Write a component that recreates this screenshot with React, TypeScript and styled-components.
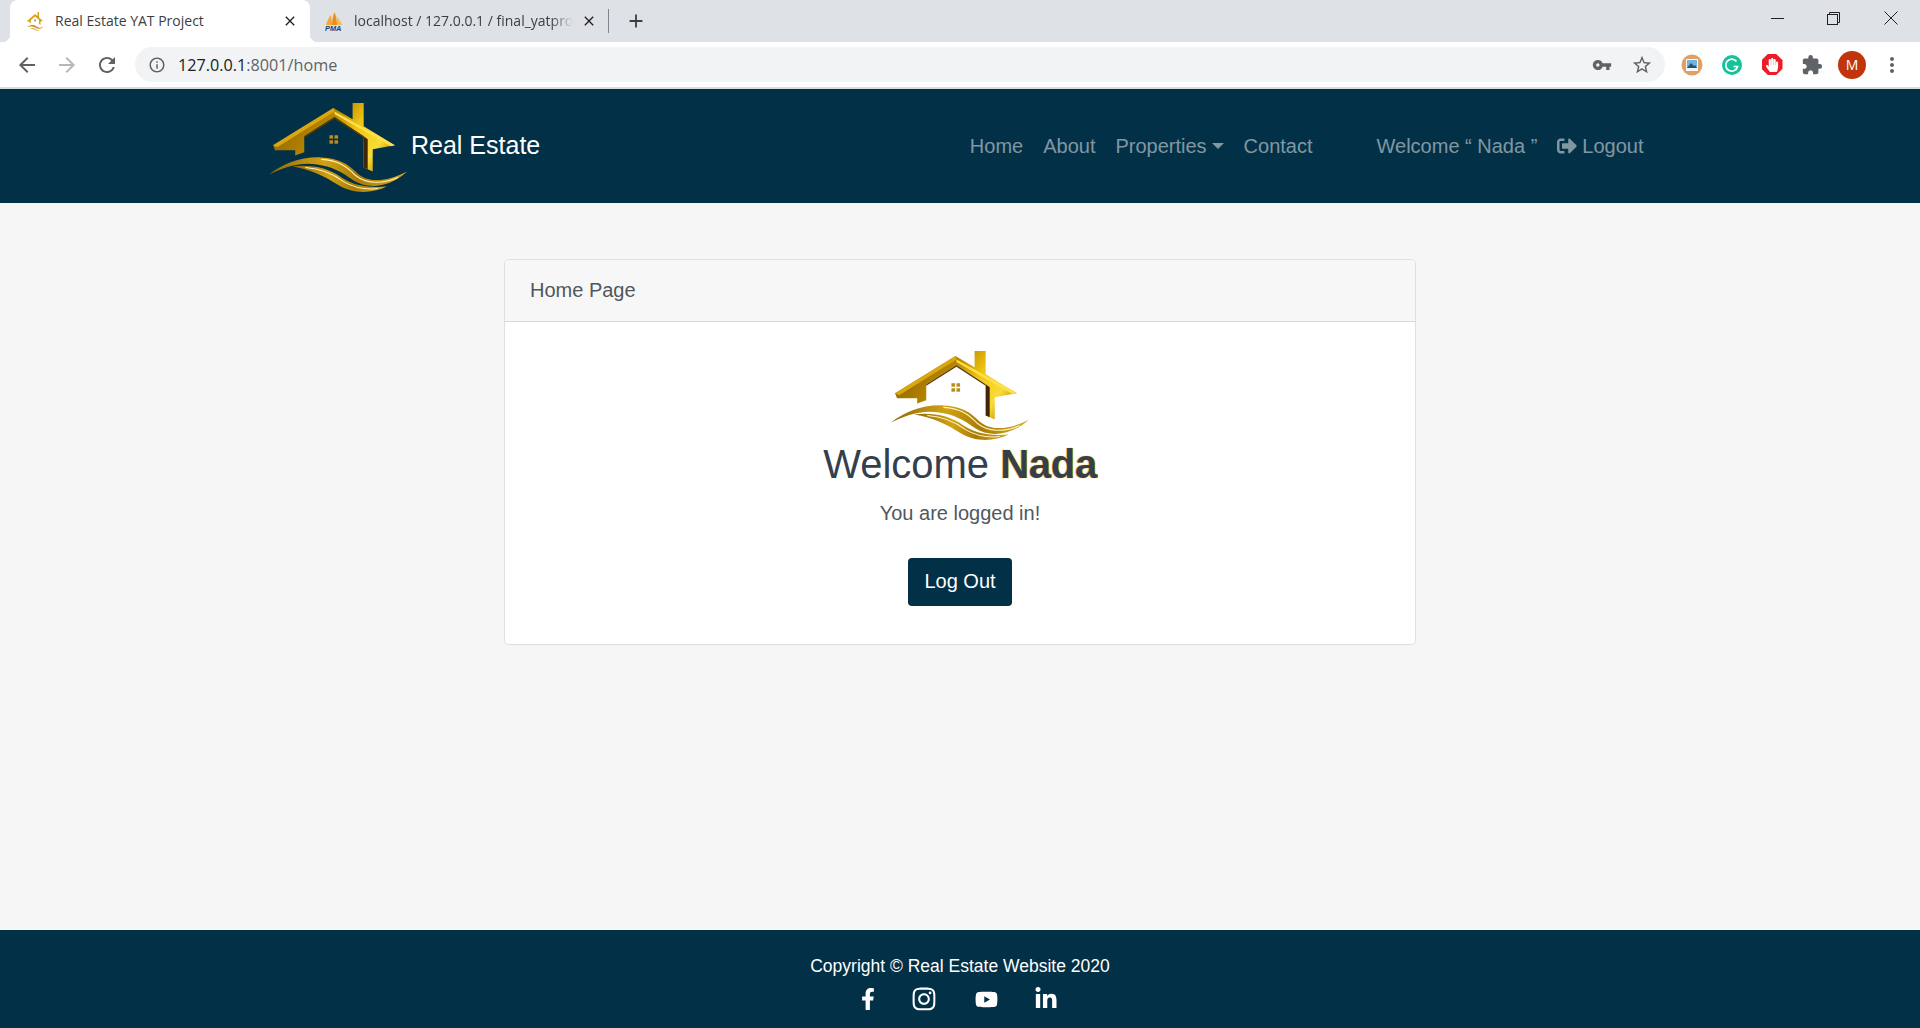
import React, { useId } from 'react';
import styled, { createGlobalStyle } from 'styled-components';
import { FaFacebookF, FaHandPaper, FaInstagram, FaLinkedinIn, FaSignOutAlt, FaYoutube } from 'react-icons/fa';
import {
  MdAdd,
  MdArrowBack,
  MdArrowForward,
  MdClose,
  MdExtension,
  MdInfoOutline,
  MdMoreVert,
  MdRefresh,
  MdStarBorder,
  MdVpnKey,
} from 'react-icons/md';

const GlobalStyle = createGlobalStyle`
  html, body {
    margin: 0;
    padding: 0;
    background: #f6f6f6;
  }
  * {
    box-sizing: border-box;
  }
`;

const navy = '#023047';

const Page = styled.div`
  display: flex;
  flex-direction: column;
  height: 1028px;
  overflow: hidden;
  font-family: 'Liberation Sans', Arial, sans-serif;
`;

/* browser chrome */
const TabStrip = styled.div`
  display: flex;
  align-items: stretch;
  flex: none;
  height: 42px;
  padding-left: 10px;
  background: #dee1e6;
  font-family: 'Open Sans', sans-serif;
  font-size: 14px;
`;

const ActiveTab = styled.div`
  position: relative;
  display: flex;
  align-items: center;
  flex: none;
  width: 300px;
  padding: 0 12px 0 16px;
  border-radius: 8px 8px 0 0;
  background: #fff;
  color: #3c4043;

  &::before,
  &::after {
    content: '';
    position: absolute;
    bottom: 0;
    width: 8px;
    height: 8px;
    background: radial-gradient(circle at var(--corner), #dee1e6 8px, #fff 8.5px);
  }
  &::before {
    left: -8px;
    --corner: 0 0;
  }
  &::after {
    right: -8px;
    --corner: 100% 0;
  }
`;

const Tab = styled.div`
  display: flex;
  align-items: center;
  flex: none;
  width: 298px;
  padding: 0 11px 0 15px;
  color: #3c4043;
`;

const TabIcon = styled.span`
  display: flex;
  flex: none;
  width: 18px;
  margin-right: 11px;
`;

const TabTitle = styled.span<{ $fade?: boolean }>`
  flex: 1;
  overflow: hidden;
  padding-bottom: 2px;
  white-space: nowrap;
  ${(p) =>
    p.$fade &&
    `
    -webkit-mask-image: linear-gradient(to right, #000 90%, transparent 100%);
    mask-image: linear-gradient(to right, #000 90%, transparent 100%);
  `}
`;

const TabClose = styled.span`
  display: flex;
  flex: none;
  margin-left: 8px;
  font-size: 16px;
  color: #202124;
`;

const TabSeparator = styled.div`
  flex: none;
  align-self: center;
  width: 1px;
  height: 24px;
  background: #80868b;
`;

const NewTab = styled.div`
  display: flex;
  align-self: center;
  flex: none;
  margin-left: 16px;
  font-size: 22px;
  color: #3c4043;
`;

const WindowControls = styled.div`
  display: flex;
  margin-left: auto;
`;

const WindowButton = styled.div`
  display: flex;
  align-items: center;
  justify-content: center;
  width: 56px;
  height: 36px;
  &:last-child {
    width: 59px;
  }
`;

const Toolbar = styled.div`
  display: flex;
  align-items: center;
  flex: none;
  height: 47px;
  padding-left: 7px;
  background: #fff;
  border-bottom: 2px solid #dadce0;
`;

const ToolButton = styled.div<{ $muted?: boolean }>`
  display: flex;
  align-items: center;
  justify-content: center;
  flex: none;
  width: 40px;
  font-size: 24px;
  color: ${(p) => (p.$muted ? '#b4b7bb' : '#5f6368')};
`;

const Omnibox = styled.div`
  display: flex;
  align-items: center;
  flex: none;
  width: 1530px;
  height: 35px;
  margin: 0 7px 0 8px;
  padding: 0 12px 0 13px;
  border-radius: 18px;
  background: #f1f3f4;
  font-family: 'Open Sans', sans-serif;
  font-size: 16.2px;
  color: #5f6368;
  svg {
    flex: none;
  }
`;

const Url = styled.span`
  margin-left: 12px;
  flex: 1;
  b {
    font-weight: 400;
    color: #202124;
  }
`;

const OmniIcons = styled.div`
  display: flex;
  align-items: center;
  gap: 19px;
  font-size: 20px;
`;

const Avatar = styled.div`
  display: flex;
  align-items: center;
  justify-content: center;
  width: 28px;
  height: 28px;
  border-radius: 50%;
  background: #c1340c;
  color: #fff;
  font-family: 'Open Sans', sans-serif;
  font-size: 14px;
`;

/* site */
const Navbar = styled.nav`
  display: flex;
  align-items: center;
  flex: none;
  height: 114px;
  padding: 0 266.5px 1px 269px;
  background: ${navy};
`;

const Brand = styled.a`
  display: flex;
  align-items: center;
  gap: 3px;
  color: #fff;
  font-size: 25px;
  svg {
    margin: 3px 0 -1px;
  }
`;

const NavLinks = styled.div`
  display: flex;
  align-items: center;
  margin-left: auto;
`;

const NavLink = styled.a<{ $push?: boolean }>`
  display: flex;
  align-items: center;
  padding: 0 10px;
  margin-left: ${(p) => (p.$push ? '44px' : '0')};
  font-size: 20px;
  line-height: 30px;
  color: rgba(255, 255, 255, 0.5);
  svg {
    margin-right: 5px;
  }
`;

const Caret = styled.span`
  width: 0;
  height: 0;
  margin-left: 5px;
  border-top: 6px solid rgba(255, 255, 255, 0.5);
  border-left: 6px solid transparent;
  border-right: 6px solid transparent;
`;

const Main = styled.main`
  flex: 1;
  padding-top: 56px;
  background: #f6f6f6;
`;

const Card = styled.section`
  width: 912px;
  margin: 0 auto 0 504px;
  border: 1px solid rgba(0, 0, 0, 0.125);
  border-radius: 5px;
  background: #fff;
  overflow: hidden;
`;

const CardHeader = styled.div`
  padding: 15px 25px 16px;
  border-bottom: 1px solid rgba(0, 0, 0, 0.125);
  background: #f7f7f7;
  font-size: 20px;
  line-height: 30px;
  color: #50575e;
`;

const CardBody = styled.div`
  display: flex;
  flex-direction: column;
  align-items: center;
  height: 322px;
  padding-top: 27px;
  svg {
    margin-bottom: -2px;
  }
`;

const Heading = styled.h1`
  margin: 0;
  font-size: 40px;
  line-height: 48px;
  font-weight: 400;
  color: #343f4e;
  b {
    letter-spacing: -0.3px;
    text-shadow: 0.6px 0 1px #eeb01a, -0.6px 0 1px #eeb01a;
  }
`;

const Lead = styled.p`
  margin: 10px 0 0;
  font-size: 20px;
  line-height: 30px;
  color: #50575e;
`;

const LogOutButton = styled.button`
  width: 104px;
  height: 48px;
  margin-top: 30px;
  padding: 0;
  border: 0;
  border-radius: 4px;
  background: ${navy};
  color: #fff;
  font-family: inherit;
  font-size: 20px;
`;

const Footer = styled.footer`
  display: flex;
  flex-direction: column;
  align-items: center;
  flex: none;
  height: 98px;
  padding-top: 26px;
  background: ${navy};
  color: #fff;
  font-size: 17.5px;
  line-height: 20px;
`;

const Socials = styled.div`
  display: flex;
  align-items: center;
  height: 26px;
  margin-top: 10px;
  padding-right: 8px;
`;

const Social = styled.a<{ $size: number; $width: number }>`
  display: flex;
  justify-content: center;
  width: ${(p) => p.$width}px;
  font-size: ${(p) => p.$size}px;
  color: #fff;
`;

function HouseLogo({ width }: { width: number }) {
  const id = useId();
  return (
    <svg width={width} viewBox="0 -2 138 92" style={{ flex: 'none', display: 'block' }}>
      <defs>
        <linearGradient id={`${id}r`} x1="0" y1="0.3" x2="1" y2="0.7">
          <stop offset="0" stopColor="#8f6400" />
          <stop offset="0.4" stopColor="#b98800" />
          <stop offset="0.62" stopColor="#f2c613" />
          <stop offset="0.85" stopColor="#f7dc3a" />
          <stop offset="1" stopColor="#c48f00" />
        </linearGradient>
        <linearGradient id={`${id}w`} x1="0" y1="0" x2="1" y2="0">
          <stop offset="0" stopColor="#8f6a08" />
          <stop offset="0.4" stopColor="#d2a214" />
          <stop offset="0.65" stopColor="#a97c06" />
          <stop offset="1" stopColor="#d8ac22" />
        </linearGradient>
      </defs>
      <path
        d="M4 42 64 5 83 16V0h11v23l31 19-22 4v22l-9-4V33L65 14 35 33v16l-9 3v-5H6z"
        fill={`url(#${id}r)`}
      />
      <path d="M94 33 98 36V65.8L94 64Z" fill="#3f2606" />
      <path d="M4 42 64 5 65 8.5 8 44Z" fill="#d9a80f" />
      <path d="M65 8.5 125 42 121 43 65 11Z" fill="#ffe04a" />
      <path d="M35 33 65 14 94 33V34.4L65 15.6 35 34.4Z" fill="#5a3c04" />
      <g fill="#b98c1c">
        <rect x="60" y="32" width="3.6" height="3.4" />
        <rect x="65" y="32" width="3.6" height="3.4" />
        <rect x="60" y="37" width="3.6" height="3.4" />
        <rect x="65" y="37" width="3.6" height="3.4" />
      </g>
      <path
        d="M0 71C14 60 32 53 52 54 70 55 78 60 88 70 98 79 116 79 137 68 120 84 98 86 84 77 72 68 62 63 48 61 30 58 14 64 0 71Z"
        fill={`url(#${id}w)`}
      />
      <path
        d="M23 63C42 61 58 64 72 74 86 83 100 84 117 83 100 91 82 90 68 81 56 73 42 66 23 63Z"
        fill={`url(#${id}w)`}
      />
      <path d="M52 56C68 57 76 62 86 72 96 80 112 81 128 74" fill="none" stroke="#fff2bd" strokeWidth="1.1" />
      <path d="M36 64C50 65 62 69 74 78 84 84 96 86 108 85" fill="none" stroke="#fff2bd" strokeWidth="1" />
    </svg>
  );
}

function Favicon() {
  return (
    <svg width="18" height="20" viewBox="0 0 18 20" style={{ display: 'block' }}>
      <path d="M1 10 9 3 11.5 5V1H13V6.5L17 10 14.5 10.5V14L13 13V9L9 5.5 5 9V11.5L3.5 12V10.5L1 10.5Z" fill="#d6a31a" />
      <rect x="8.2" y="8.5" width="1.8" height="1.8" fill="#c08a20" />
      <path d="M1 16C5 13.5 8 13.5 10.5 15.5 12.5 17 15 17 17.5 15.5 15.5 18 12.5 18.5 10 17 7.5 15.5 5 15 1 16Z" fill="#c89a2a" />
      <path d="M4 17.5C7 16.5 9 17.5 11 19 12.5 19.6 14 19.5 15 19 12.5 20.5 10 20 8 18.5 7 18 5.5 17.7 4 17.5Z" fill="#d8b050" />
    </svg>
  );
}

function PmaIcon() {
  return (
    <svg width="18" height="20" viewBox="0 0 18 20" style={{ display: 'block' }}>
      <path d="M1 14C2 10 4 7 5.5 4 6.5 7 7 10 7 14Z" fill="#f5a733" />
      <path d="M7 14C7 9 8 5 9.5 1 11 5 12 9 12 14Z" fill="#ee8a1e" />
      <path d="M12 14C12 11 11.5 8 11.5 5 14 8 16 11 17.5 14Z" fill="#f8bd5a" />
      <text x="0" y="19.5" fontFamily="'Liberation Sans', sans-serif" fontSize="7.4" fontWeight="700" fontStyle="italic" fill="#1c3f7c">
        PMA
      </text>
    </svg>
  );
}

function PhotoExtension() {
  return (
    <svg width="22" height="22" viewBox="0 0 22 22">
      <circle cx="11" cy="11" r="10.5" fill="#e0a064" />
      <rect x="5" y="5" width="12" height="12" fill="#f4f6f8" />
      <rect x="6" y="6" width="10" height="8" fill="#6fb3e0" />
      <path d="M6 14 10 9 13 12 14 11 16 14Z" fill="#23527c" />
    </svg>
  );
}

function GrammarlyExtension() {
  return (
    <svg width="22" height="22" viewBox="0 0 22 22">
      <circle cx="11" cy="11" r="10" fill="#15c39a" />
      <path d="M15.5 7.5A6 6 0 1 0 16.6 12.5H12.5" fill="none" stroke="#fff" strokeWidth="1.7" />
    </svg>
  );
}

function BlockerExtension() {
  return (
    <StopSign>
      <FaHandPaper size={14} color="#fff" />
    </StopSign>
  );
}

const StopSign = styled.div`
  display: flex;
  align-items: center;
  justify-content: center;
  width: 21px;
  height: 21px;
  background: #ee1c25;
  clip-path: polygon(30% 0, 70% 0, 100% 30%, 100% 70%, 70% 100%, 30% 100%, 0 70%, 0 30%);
`;

export default function App() {
  return (
    <Page>
      <GlobalStyle />
      <TabStrip>
        <ActiveTab>
          <TabIcon>
            <Favicon />
          </TabIcon>
          <TabTitle>Real Estate YAT Project</TabTitle>
          <TabClose>
            <MdClose />
          </TabClose>
        </ActiveTab>
        <Tab>
          <TabIcon>
            <PmaIcon />
          </TabIcon>
          <TabTitle $fade>localhost / 127.0.0.1 / final_yatpro</TabTitle>
          <TabClose>
            <MdClose />
          </TabClose>
        </Tab>
        <TabSeparator />
        <NewTab>
          <MdAdd />
        </NewTab>
        <WindowControls>
          <WindowButton>
            <svg width="13" height="13" viewBox="0 0 13 13">
              <path d="M0 6.5H13" stroke="#202124" />
            </svg>
          </WindowButton>
          <WindowButton>
            <svg width="13" height="13" viewBox="0 0 13 13" fill="none" stroke="#202124">
              <rect x="0.5" y="2.5" width="10" height="10" />
              <path d="M2.5 2.5V0.5H12.5V10.5H10.5" />
            </svg>
          </WindowButton>
          <WindowButton>
            <svg width="14" height="14" viewBox="0 0 14 14">
              <path d="M0.5 0.5 13.5 13.5M13.5 0.5 0.5 13.5" stroke="#202124" />
            </svg>
          </WindowButton>
        </WindowControls>
      </TabStrip>
      <Toolbar>
        <ToolButton>
          <MdArrowBack />
        </ToolButton>
        <ToolButton $muted>
          <MdArrowForward />
        </ToolButton>
        <ToolButton>
          <MdRefresh />
        </ToolButton>
        <Omnibox>
          <MdInfoOutline size={18} />
          <Url>
            <b>127.0.0.1</b>:8001/home
          </Url>
          <OmniIcons>
            <MdVpnKey />
            <MdStarBorder size={22} />
          </OmniIcons>
        </Omnibox>
        <ToolButton>
          <PhotoExtension />
        </ToolButton>
        <ToolButton>
          <GrammarlyExtension />
        </ToolButton>
        <ToolButton>
          <BlockerExtension />
        </ToolButton>
        <ToolButton>
          <MdExtension size={22} />
        </ToolButton>
        <ToolButton>
          <Avatar>M</Avatar>
        </ToolButton>
        <ToolButton>
          <MdMoreVert />
        </ToolButton>
      </Toolbar>
      <Navbar>
        <Brand>
          <HouseLogo width={139} />
          Real Estate
        </Brand>
        <NavLinks>
          <NavLink>Home</NavLink>
          <NavLink>About</NavLink>
          <NavLink>
            Properties
            <Caret />
          </NavLink>
          <NavLink>Contact</NavLink>
          <NavLink $push>Welcome “ Nada ”</NavLink>
          <NavLink>
            <FaSignOutAlt size={20} />
            Logout
          </NavLink>
        </NavLinks>
      </Navbar>
      <Main>
        <Card>
          <CardHeader>Home Page</CardHeader>
          <CardBody>
            <HouseLogo width={139} />
            <Heading>
              Welcome <b>Nada</b>
            </Heading>
            <Lead>You are logged in!</Lead>
            <LogOutButton>Log Out</LogOutButton>
          </CardBody>
        </Card>
      </Main>
      <Footer>
        Copyright © Real Estate Website 2020
        <Socials>
          <Social $size={22} $width={56}>
            <FaFacebookF />
          </Social>
          <Social $size={26} $width={56}>
            <FaInstagram />
          </Social>
          <Social $size={23} $width={68}>
            <FaYoutube />
          </Social>
          <Social $size={24} $width={52}>
            <FaLinkedinIn />
          </Social>
        </Socials>
      </Footer>
    </Page>
  );
}
